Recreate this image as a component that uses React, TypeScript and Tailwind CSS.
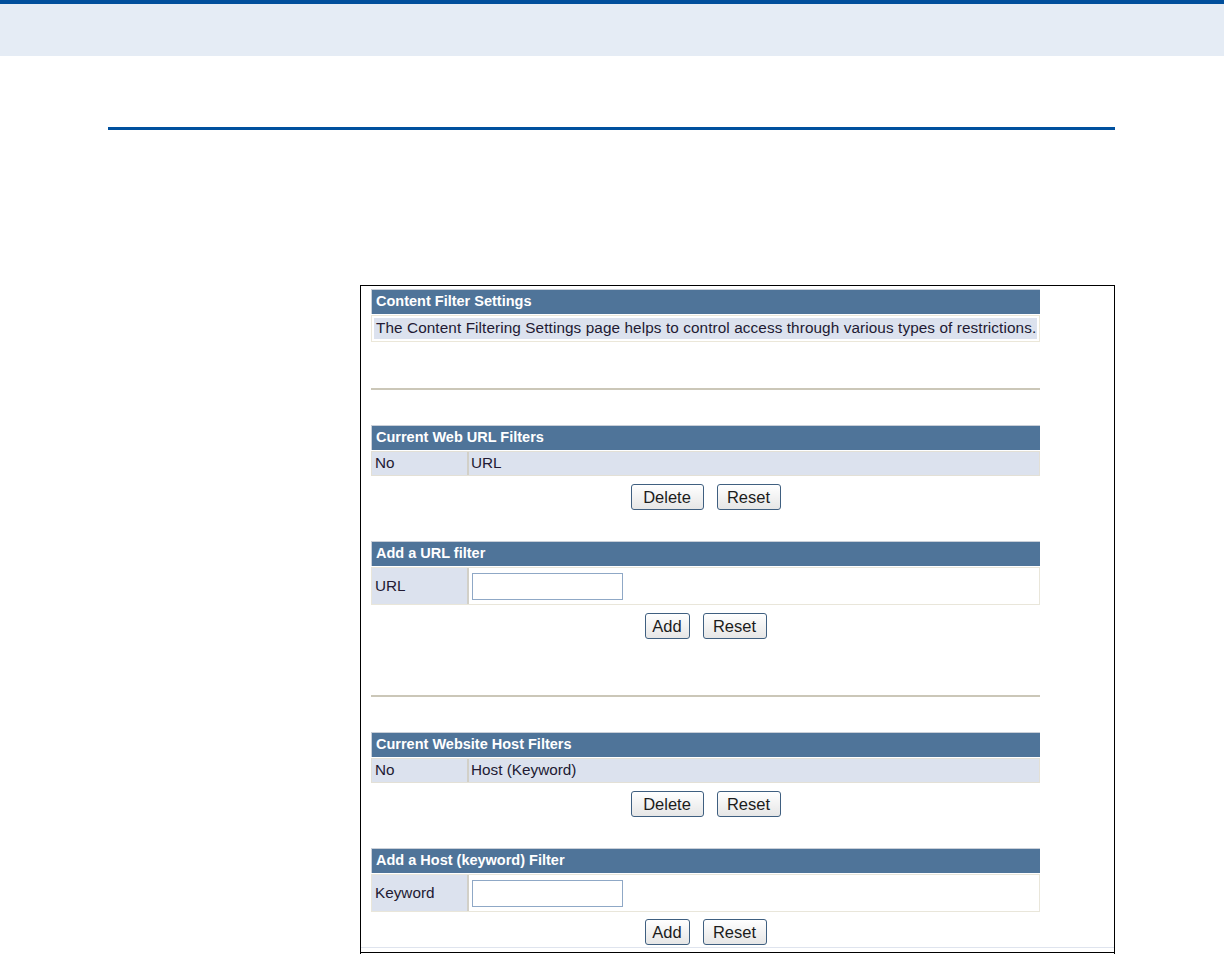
import React from 'react';

const font = { fontFamily: '"Liberation Sans", Arial, sans-serif' };

const Header = ({ title, className = '' }: { title: string; className?: string }) => (
  <div
    className={`h-[25px] bg-[#4f7499] border-t border-l border-[#c9cfd8] flex items-center pl-[4px] text-[14.5px] font-bold text-white whitespace-nowrap ${className}`}
  >
    {title}
  </div>
);

const Btn = ({ label, w }: { label: string; w: string }) => (
  <button
    className={`${w} h-[26px] rounded-[3px] border border-[#3f5f80] bg-gradient-to-b from-white to-[#e6e6e6] text-[16.5px] text-[#1c1c1c] leading-none flex items-center justify-center`}
  >
    {label}
  </button>
);

const ListRow = ({ left, right }: { left: string; right: string }) => (
  <div className="mt-[1px] h-[25px] flex text-[15.3px] text-[#221a33] border border-[#e3e0d6]">
    <div className="w-[97px] bg-[#dce2ee] border-r-2 border-[#d2d0c8] flex items-center pl-[3px]">{left}</div>
    <div className="flex-1 bg-[#dce2ee] flex items-center pl-[2px]">{right}</div>
  </div>
);

const InputRow = ({ label }: { label: string }) => (
  <div className="mt-[1px] h-[38px] flex text-[15.3px] text-[#221a33] border border-[#e9e6da]">
    <div className="w-[97px] bg-[#dce2ee] border-r-2 border-[#d2d0c8] flex items-center pl-[3px]">{label}</div>
    <div className="flex-1 bg-white flex items-center pl-[3px]">
      <input className="w-[151px] h-[27px] border border-[#8fa8c6] bg-white outline-none" />
    </div>
  </div>
);

const ButtonRow = ({ a, aw, className = '' }: { a: string; aw: string; className?: string }) => (
  <div className={`h-[26px] flex justify-center items-center gap-[13px] ${className}`}>
    <Btn label={a} w={aw} />
    <Btn label="Reset" w="w-[64px]" />
  </div>
);

export default function App() {
  return (
    <div className="w-[1224px] h-[954px] bg-white overflow-hidden" style={font}>
      <div className="h-[4px] bg-[#004f9c]" />
      <div className="h-[52px] bg-[#e5ecf5]" />
      <div className="mt-[71px] ml-[108px] w-[1007px] h-[3px] bg-[#00509e]" />

      <div className="mt-[155px] ml-[360px] w-[755px] h-[700px] border border-black border-b-0 pt-[3px] pl-[10px]">
        <div className="w-[669px]">
          <Header title="Content Filter Settings" className="h-[24px]" />
          <div className="mt-[1px] h-[27px] border border-[#ebe7d9] p-[2px]">
            <div className="h-full bg-[#dce2ee] flex items-center pl-[2px] text-[15.3px] tracking-[0.1px] text-[#221a33] whitespace-nowrap overflow-hidden">
              The Content Filtering Settings page helps to control access through various types of restrictions.
            </div>
          </div>

          <div className="mt-[46px] h-[2px] bg-[#cbc7b8]" />

          <Header title="Current Web URL Filters" className="mt-[35px]" />
          <ListRow left="No" right="URL" />
          <ButtonRow a="Delete" aw="w-[73px]" className="mt-[8px]" />

          <Header title="Add a URL filter" className="mt-[31px]" />
          <InputRow label="URL" />
          <ButtonRow a="Add" aw="w-[45px]" className="mt-[8px]" />

          <div className="mt-[56px] h-[2px] bg-[#cbc7b8]" />

          <Header title="Current Website Host Filters" className="mt-[35px]" />
          <ListRow left="No" right="Host (Keyword)" />
          <ButtonRow a="Delete" aw="w-[73px]" className="mt-[8px]" />

          <Header title="Add a Host (keyword) Filter" className="mt-[31px]" />
          <InputRow label="Keyword" />
          <ButtonRow a="Add" aw="w-[45px]" className="mt-[7px]" />
        </div>
        <div className="mt-[2px] -ml-[10px] h-[1px] bg-[#dfe4ee]" />
        <div className="mt-[4px] -ml-[11px] w-[755px] h-[1px] bg-black" />
      </div>
    </div>
  );
}
